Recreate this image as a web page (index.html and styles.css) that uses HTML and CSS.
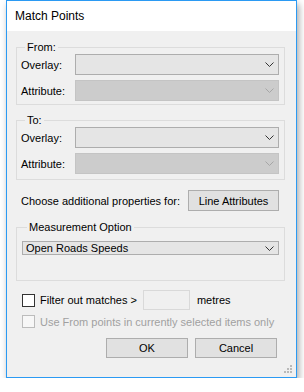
FILE: index.html
```html
<!DOCTYPE html>
<html lang="en">
<head>
    <meta charset="UTF-8">
    <title>Match Points</title>
    <link rel="stylesheet" href="styles.css">
</head>
<body>
    <div class="window">
        <div class="title-bar">Match Points</div>

        <div class="dialog-body">
            <fieldset class="group">
                <legend>From:</legend>
                <div class="field-row">
                    <span class="field-label">Overlay:</span>
                    <div class="combo">
                        <span class="combo-text"></span>
                        <svg class="chevron" width="9" height="5" viewBox="0 0 9 5"><path d="M0.5 0.5 L4.5 4.5 L8.5 0.5" fill="none" stroke="#333" stroke-width="1"/></svg>
                    </div>
                </div>
                <div class="field-row">
                    <span class="field-label">Attribute:</span>
                    <div class="combo disabled">
                        <span class="combo-text"></span>
                        <svg class="chevron" width="9" height="5" viewBox="0 0 9 5"><path d="M0.5 0.5 L4.5 4.5 L8.5 0.5" fill="none" stroke="#a6a6a6" stroke-width="1"/></svg>
                    </div>
                </div>
            </fieldset>

            <fieldset class="group group-to">
                <legend>To:</legend>
                <div class="field-row">
                    <span class="field-label">Overlay:</span>
                    <div class="combo">
                        <span class="combo-text"></span>
                        <svg class="chevron" width="9" height="5" viewBox="0 0 9 5"><path d="M0.5 0.5 L4.5 4.5 L8.5 0.5" fill="none" stroke="#333" stroke-width="1"/></svg>
                    </div>
                </div>
                <div class="field-row">
                    <span class="field-label">Attribute:</span>
                    <div class="combo disabled">
                        <span class="combo-text"></span>
                        <svg class="chevron" width="9" height="5" viewBox="0 0 9 5"><path d="M0.5 0.5 L4.5 4.5 L8.5 0.5" fill="none" stroke="#a6a6a6" stroke-width="1"/></svg>
                    </div>
                </div>
            </fieldset>

            <div class="props-row">
                <span>Choose additional properties for:</span>
                <button class="btn btn-props">Line Attributes</button>
            </div>

            <fieldset class="group group-measure">
                <legend>Measurement Option</legend>
                <div class="combo combo-wide">
                    <span class="combo-text">Open Roads Speeds</span>
                    <svg class="chevron" width="9" height="5" viewBox="0 0 9 5"><path d="M0.5 0.5 L4.5 4.5 L8.5 0.5" fill="none" stroke="#333" stroke-width="1"/></svg>
                </div>
            </fieldset>

            <div class="filter-row">
                <span class="checkbox"></span>
                <span class="check-label">Filter out matches &gt;</span>
                <span class="textbox"></span>
                <span class="unit">metres</span>
            </div>

            <div class="filter-row selected-row">
                <span class="checkbox disabled"></span>
                <span class="check-label muted">Use From points in currently selected items only</span>
            </div>

            <div class="actions">
                <button class="btn btn-action">OK</button>
                <button class="btn btn-action">Cancel</button>
            </div>
        </div>

        <svg class="grip" width="9" height="9" viewBox="0 0 9 9">
            <rect x="6" y="0" width="2" height="2" fill="#b9b9b9"/>
            <rect x="3" y="3" width="2" height="2" fill="#b9b9b9"/>
            <rect x="6" y="3" width="2" height="2" fill="#b9b9b9"/>
            <rect x="0" y="6" width="2" height="2" fill="#b9b9b9"/>
            <rect x="3" y="6" width="2" height="2" fill="#b9b9b9"/>
            <rect x="6" y="6" width="2" height="2" fill="#b9b9b9"/>
        </svg>
    </div>
</body>
</html>
```

FILE: styles.css
```css
* {
    margin: 0;
    padding: 0;
    box-sizing: border-box;
}

body {
    background: #ffffff;
    font-family: 'Liberation Sans', Arial, sans-serif;
    font-size: 11px;
    color: #000;
}

.window {
    position: relative;
    width: 291px;
    height: 378px;
    margin-left: 6px;
    border: 1px solid #2b9af3;
    background: #f0f0f0;
    box-shadow: 2px 4px 7px rgba(0, 0, 0, 0.35);
}

.title-bar {
    height: 30px;
    background: #fff;
    padding-left: 8px;
    font-size: 12px;
    line-height: 30px;
}

.dialog-body {
    display: flex;
    flex-direction: column;
}

.group {
    margin: 10px 11px 0 9px;
    border: 1px solid #dcdcdc;
    padding: 0 5px 3px 4px;
    display: flex;
    flex-direction: column;
    gap: 5px;
}

.group legend {
    margin-left: 4px;
    padding: 0 2px;
    line-height: 13px;
}

.group-to {
    margin-top: 9px;
    padding-bottom: 5px;
}

.field-row {
    display: flex;
    align-items: center;
}

.field-label {
    width: 54px;
    flex-shrink: 0;
}

.combo {
    flex: 1;
    height: 21px;
    border: 1px solid #adadad;
    background: #e5e5e5;
    display: flex;
    align-items: center;
    padding: 0 4px 0 3px;
}

.combo.disabled {
    background: #cccccc;
    border-color: #c4c4c4;
}

.combo-text {
    flex: 1;
}

.chevron {
    display: block;
}

.props-row {
    display: flex;
    align-items: center;
    justify-content: space-between;
    margin: 10px 17px 0 14px;
}

.btn {
    font-family: inherit;
    font-size: 11px;
    color: #000;
    background: #e1e1e1;
    border: 1px solid #adadad;
}

.btn-props {
    width: 91px;
    height: 21px;
}

.group-measure {
    margin-top: 10px;
    padding: 7px 5px 25px 5px;
}

.group-measure legend {
    margin-left: 5px;
}

.filter-row {
    display: flex;
    align-items: center;
    margin: 9px 0 0 15px;
    height: 20px;
}

.checkbox {
    width: 13px;
    height: 13px;
    border: 1px solid #333;
    background: #fff;
    flex-shrink: 0;
}

.checkbox.disabled {
    border-color: #bcbcbc;
    background: #f7f7f7;
}

.check-label {
    margin-left: 5px;
}

.muted {
    color: #a0a0a0;
}

.textbox {
    width: 47px;
    height: 20px;
    margin-left: 6px;
    border: 1px solid #d9d9d9;
    background: #f0f0f0;
}

.unit {
    margin-left: 7px;
}

.selected-row {
    margin-top: 3px;
    height: 17px;
}

.actions {
    display: flex;
    justify-content: flex-end;
    gap: 7px;
    margin: 8px 19px 0 0;
}

.btn-action {
    width: 82px;
    height: 20px;
}

.grip {
    position: absolute;
    right: 3px;
    bottom: 3px;
}
```
